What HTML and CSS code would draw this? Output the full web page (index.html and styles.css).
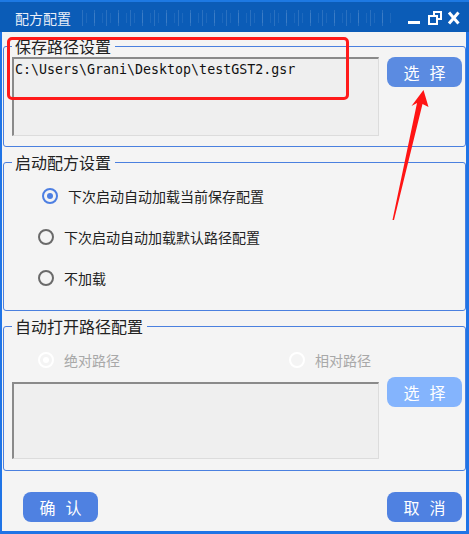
FILE: index.html
```html
<!DOCTYPE html>
<html lang="zh-CN">
<head>
<meta charset="utf-8">
<title>配方配置</title>
<link rel="stylesheet" href="styles.css">
</head>
<body>
<div class="window">
  <div class="titlebar">
    <span class="title">配方配置</span>
    <span class="ticks"></span>
    <svg class="controls" width="53" height="14" viewBox="0 0 53 14">
      <rect x="1" y="10" width="12" height="3" fill="#fff"/>
      <rect x="27" y="1" width="7" height="7" fill="none" stroke="#fff" stroke-width="2"/>
      <rect x="22" y="5" width="8" height="8" fill="#0b5cb7" stroke="#fff" stroke-width="2"/>
      <path d="M42 1.5 L51.5 12.5 M51.5 1.5 L42 12.5" stroke="#fff" stroke-width="3" fill="none"/>
    </svg>
  </div>
  <div class="content">
    <fieldset class="group g1">
      <legend>保存路径设置</legend>
      <div class="path-row">
        <div class="path-box path-box-1">C:\Users\Grani\Desktop\testGST2.gsr</div>
        <button class="btn btn-select">选择</button>
      </div>
    </fieldset>

    <fieldset class="group g2">
      <legend>启动配方设置</legend>
      <div class="option option-first"><span class="radio radio-checked"></span><span>下次启动自动加载当前保存配置</span></div>
      <div class="option"><span class="radio"></span><span>下次启动自动加载默认路径配置</span></div>
      <div class="option"><span class="radio"></span><span>不加载</span></div>
    </fieldset>

    <fieldset class="group g3">
      <legend>自动打开路径配置</legend>
      <div class="option-row">
        <div class="option option-disabled option-abs"><span class="radio radio-disabled-checked"></span><span>绝对路径</span></div>
        <div class="option option-disabled"><span class="radio radio-disabled"></span><span>相对路径</span></div>
      </div>
      <div class="path-row path-row-2">
        <div class="path-box path-box-2"></div>
        <button class="btn btn-disabled">选择</button>
      </div>
    </fieldset>

    <div class="footer">
      <button class="btn btn-main">确认</button>
      <button class="btn btn-main">取消</button>
    </div>
  </div>

  <div class="mark"></div>
  <svg class="arrow" width="469" height="534" viewBox="0 0 469 534">
    <polygon points="423.5,90 428.5,107 422.5,104 394,220 392.5,220 417,103 411.5,106" fill="#ff1414"/>
  </svg>
</div>
</body>
</html>
```

FILE: styles.css
```css
* { box-sizing: border-box; }

html, body {
  margin: 0;
  padding: 0;
  background: #f4f4f4;
}

body {
  font-family: "Noto Sans CJK SC", "Noto Sans", sans-serif;
  color: #222;
}

.window {
  position: relative;
  width: 469px;
  height: 534px;
  display: flex;
  flex-direction: column;
  background: #f4f4f4;
  overflow: hidden;
}

.titlebar {
  height: 32px;
  flex: 0 0 32px;
  background: #0b5cb7;
  border-top: 2px solid #1d79e3;
  display: flex;
  align-items: center;
  padding-left: 15px;
}

.title {
  font-size: 14px;
  line-height: 16px;
  color: #e9eef8;
  width: 56px;
  margin-top: 1px;
}

.ticks {
  width: 310px;
  height: 16px;
  margin-left: 11px;
  margin-top: 2px;
  background-image:
    repeating-linear-gradient(90deg, rgba(255,255,255,0.13) 0 1px, transparent 1px 12px),
    repeating-linear-gradient(90deg, transparent 0 4px, rgba(255,255,255,0.08) 4px 5px, transparent 5px 8px);
  background-size: 310px 16px, 310px 10px;
  background-position: 0 center, 0 center;
  background-repeat: no-repeat;
}

.controls {
  margin-left: 15px;
  margin-top: 2px;
  display: block;
}

.content {
  flex: 1;
  display: flex;
  flex-direction: column;
  border-left: 2px solid #1f74e6;
  border-right: 3px solid #1f74e6;
  border-bottom: 3px solid #1f74e6;
}

.group {
  margin: 6px 0 0 1px;
  border: 1px solid #4a80df;
  border-radius: 3px;
  min-width: 0;
}

.group legend {
  font-size: 16px;
  line-height: 20px;
  padding: 0 4px 0 3px;
  color: #222;
}

.g1 {
  margin-top: 4px;
  padding: 1px 3px 10px 8px;
}

.g2 {
  margin-top: 5px;
  padding: 14px 3px 22px 8px;
}

.g3 {
  margin-top: 5px;
  padding: 14px 3px 11px 8px;
}

.path-row {
  display: flex;
  align-items: flex-start;
  gap: 8px;
}

.path-box {
  width: 367px;
  background: #efefef;
  border-top: 2px solid #8a8a8a;
  border-left: 2px solid #8a8a8a;
  border-right: 1px solid #dcdcdc;
  border-bottom: 1px solid #dcdcdc;
  font-family: "DejaVu Sans Mono", "Liberation Mono", monospace;
  font-size: 13.3px;
  line-height: 16px;
  color: #111;
  padding: 3px 0 0 1px;
  white-space: nowrap;
}

.path-box-1 { height: 79px; }

.path-row-2 { margin-top: 7px; }
.path-box-2 { height: 77px; margin-top: 5px; }

.btn {
  width: 75px;
  height: 30px;
  border: none;
  border-radius: 8px;
  color: #fff;
  font-family: "Noto Sans CJK SC", sans-serif;
  font-size: 16px;
  line-height: 30px;
  letter-spacing: 10px;
  padding: 0 0 0 10px;
  text-align: center;
}

.btn-select { background: #5b8be1; }
.btn-disabled { background: #84b4fd; }
.btn-main { background: #4f81e1; }

.option {
  display: flex;
  align-items: center;
  gap: 10px;
  font-size: 14px;
  line-height: 20px;
  margin-left: 26px;
  color: #222;
}

.option + .option { margin-top: 21px; }
.option-first { margin-left: 30px; }

.option-row {
  display: flex;
}

.option-row .option + .option { margin-top: 0; margin-left: 0; }
.option-abs { width: 251px; }

.option-disabled { color: #a8a8a8; }

.radio {
  width: 16px;
  height: 16px;
  flex: 0 0 16px;
  border-radius: 50%;
  border: 2px solid #6a6a6a;
  display: flex;
  align-items: center;
  justify-content: center;
}

.radio-checked {
  border-color: #4d7fe2;
}

.radio-checked::after {
  content: "";
  width: 6px;
  height: 6px;
  border-radius: 50%;
  background: #4d7fe2;
}

.radio-disabled,
.radio-disabled-checked {
  border-color: #ffffff;
  border-width: 2.5px;
}

.radio-disabled-checked::after {
  content: "";
  width: 6px;
  height: 6px;
  border-radius: 50%;
  background: #ffffff;
}

.footer {
  display: flex;
  justify-content: space-between;
  padding: 21px 4px 0 21px;
}

.mark {
  position: absolute;
  left: 7px;
  top: 37px;
  width: 342px;
  height: 63px;
  border: 3px solid #ff1a1a;
  border-radius: 5px;
  pointer-events: none;
}

.arrow {
  position: absolute;
  left: 0;
  top: 0;
  pointer-events: none;
}
```
